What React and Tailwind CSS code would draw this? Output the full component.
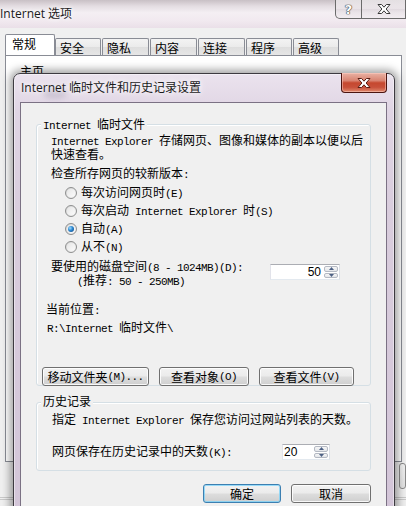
import React from 'react'

const MONO = "font-['Liberation_Mono',monospace] text-[11px] tracking-[-0.6px]"

// ASCII runs get the narrow mono face, the rest stays CJK
function M({ t }) {
  const parts = t.split(/([\x20-\x7E]+)/).filter(Boolean)
  return parts.map((p, i) =>
    /^[\x20-\x7E]+$/.test(p) ? (
      <span key={i} className={`${MONO} whitespace-pre`}>{p}</span>
    ) : (
      <span key={i}>{p}</span>
    )
  )
}

function XGlyph({ stroke }) {
  return (
    <svg width="14" height="10" viewBox="0 0 14 10">
      <path
        d="M1 0.5H4.6L7 3.2L9.4 0.5H13L9.1 5L13 9.5H9.4L7 6.8L4.6 9.5H1L4.9 5Z"
        fill="#fff"
        stroke={stroke}
        strokeWidth="1"
        strokeLinejoin="round"
      />
    </svg>
  )
}

function Radio({ on, label }) {
  return (
    <div className="flex h-[18px] items-center">
      <span className="flex h-[12px] w-[12px] items-center justify-center rounded-full border border-[#8e8f8f] bg-[linear-gradient(135deg,#d4d4d4,#f6f6f6)]">
        <span className="h-[8px] w-[8px] rounded-full bg-[linear-gradient(135deg,#e6e6e6,#fbfbfb)] flex items-center justify-center">
          {on && (
            <span className="h-[6px] w-[6px] rounded-full bg-[radial-gradient(circle_at_35%_35%,#9fdcff_0%,#2a86cf_45%,#0e3f78_100%)]" />
          )}
        </span>
      </span>
      <span className="ml-[4px] leading-[12px] whitespace-nowrap">
        <M t={label} />
      </span>
    </div>
  )
}

function SpinArrows() {
  return (
    <div className="flex w-[16px] flex-col gap-[1px] p-[1px]">
      <div className="flex flex-1 items-center justify-center rounded-[2px] border border-[#b4b9c3] bg-[linear-gradient(#f6f6f6,#e3e6ea)]">
        <svg width="5" height="3" viewBox="0 0 5 3">
          <path d="M0 3L2.5 0L5 3Z" fill="#4d6185" />
        </svg>
      </div>
      <div className="flex flex-1 items-center justify-center rounded-[2px] border border-[#b4b9c3] bg-[linear-gradient(#f6f6f6,#e3e6ea)]">
        <svg width="5" height="3" viewBox="0 0 5 3">
          <path d="M0 0L2.5 3L5 0Z" fill="#4d6185" />
        </svg>
      </div>
    </div>
  )
}

function Btn({ children, className = '', def = false }) {
  return (
    <div
      className={`flex h-[19px] items-center justify-center whitespace-nowrap rounded-[3px] border leading-[12px] bg-[linear-gradient(#f2f2f2_0%,#ebebeb_48%,#dddddd_52%,#cfcfcf_100%)] ${
        def
          ? 'border-[#3c7fb1] shadow-[inset_0_0_0_1px_rgba(120,210,250,0.75)]'
          : 'border-[#707070] shadow-[inset_0_0_0_1px_rgba(255,255,255,0.85)]'
      } ${className}`}
    >
      {children}
    </div>
  )
}

const TABS = [
  { label: '安全', w: 'w-[46px]' },
  { label: '隐私', w: 'w-[47px]' },
  { label: '内容', w: 'w-[47px]' },
  { label: '连接', w: 'w-[47px]' },
  { label: '程序', w: 'w-[46px]' },
  { label: '高级', w: 'w-[46px]' },
]

export default function App() {
  return (
    <div className="relative h-[506px] w-[406px] overflow-hidden bg-[#f0f0f0] font-['Noto_Sans_CJK_SC',sans-serif] text-[12px] text-black">
      {/* outer window: Internet 选项 */}
      <div className="flex h-[28px] bg-[linear-gradient(180deg,#c8c0c5_0%,#e4dde2_22%,#f4eff3_45%,#f1e9ef_75%,#eadfe8_100%)]">
        <div className="flex items-center font-['Open_Sans','Noto_Sans_CJK_SC',sans-serif] text-[12px] text-[#1a1a1a] [text-shadow:0_0_4px_#fff,0_0_6px_#fff]">
          Internet 选项
        </div>
        <div className="ml-auto flex h-[19px] self-start">
          <div className="flex w-[27px] items-center justify-center rounded-bl-[5px] border border-t-0 border-[#6b6b6b] bg-[linear-gradient(#ffffff80,#e8e2e680_50%,#d6ced480_51%,#f2eef180)]">
            <span className="font-['DejaVu_Sans',sans-serif] text-[13px] font-bold leading-none text-white [text-shadow:0_0_1px_#333,0_0_1px_#333,0_0_1px_#333]">
              ?
            </span>
          </div>
          <div className="flex w-[44px] items-center justify-center border border-t-0 border-l-0 border-[#6b6b6b] bg-[linear-gradient(#ffffff80,#e8e2e680_50%,#d6ced480_51%,#f2eef180)]">
            <XGlyph stroke="#3a3a3a" />
          </div>
        </div>
      </div>

      <div className="mt-[7px] flex h-[20px] items-end pl-[5px]">
        <div className="relative z-10 h-[21px] w-[50px] rounded-t-[2px] border border-b-0 border-[#898c95] bg-white pl-[6px] pt-[3px] leading-[12px]">
          常规
        </div>
        {TABS.map((t, i) => (
          <div
            key={t.label}
            className={`h-[17px] ${t.w} ${i === 0 ? 'ml-0' : 'ml-[1px]'} rounded-t-[2px] border border-b-0 border-[#898c95] bg-[linear-gradient(#f3f3f3,#ebebeb_50%,#dedede_51%,#e6e6e6)] pl-[4px] pt-[3px] leading-[12px]`}
          >
            {t.label}
          </div>
        ))}
      </div>

      <div className="ml-[5px] h-[407px] w-[397px] border border-[#898c95] bg-white pl-[14px] pt-[9px] leading-[12px]">
        主页
      </div>
      <div className="flex">
        <div className="ml-[399px] mt-[1px] h-[26px] w-[80px] rounded-[3px] border border-[#8a8a8a] bg-[linear-gradient(#f2f2f2,#e3e3e3)]" />
      </div>
      <div className="mt-[8px] h-[3px] border-y border-[#c9c9c9]" />

      {/* inner dialog */}
      <div className="absolute left-[13px] top-[73px] h-[450px] w-[382px] rounded-t-[7px] border border-[#3d3a40] bg-[linear-gradient(180deg,#ebe3ee_0%,#e0d5e4_8%,#d9cddd_30%,#d3c5d8_100%)] shadow-[0_0_9px_3px_rgba(0,0,0,0.38),inset_0_0_0_1px_rgba(255,255,255,0.45)]">
        <div className="relative flex h-[28px] items-center pl-[7px]">
          <div className="absolute left-[30px] top-[14px] h-[10px] w-[22px] rounded-full bg-[#9a93a8] opacity-40 blur-[3px]" />
          <span className="relative font-['Open_Sans','Noto_Sans_CJK_SC',sans-serif] text-[12px] text-[#1b1b1b] [text-shadow:0_0_5px_#fff,0_0_8px_#fff]">
            Internet 临时文件和历史记录设置
          </span>
          <div className="absolute right-[7px] top-[-1px] flex h-[20px] w-[46px] items-center justify-center rounded-b-[4px] border border-t-0 border-[#4a1410] bg-[linear-gradient(180deg,#e9b2a4_0%,#d98472_40%,#c6482f_52%,#c8503a_75%,#e08a6e_100%)] shadow-[inset_0_0_0_1px_rgba(255,210,200,0.5)]">
            <XGlyph stroke="#5a1c12" />
          </div>
        </div>

        <div className="ml-[6px] mr-[7px] h-[420px] border border-[#7b7184] bg-[#f0f0f0]">
          {/* Internet 临时文件 */}
          <div className="relative mx-[15px] mt-[21px] h-[262px] rounded-[3px] border border-[#d5dfe5] shadow-[inset_1px_1px_0_#fff]">
            <div className="absolute left-[4px] top-[-7px] bg-[#f0f0f0] px-[2px] leading-[12px] whitespace-nowrap">
              <M t="Internet 临时文件" />
            </div>
            <div className="mt-[9px] pl-[14px] leading-[12px] whitespace-nowrap">
              <M t="Internet Explorer 存储网页、图像和媒体的副本以便以后" />
              <br />
              快速查看。
            </div>
            <div className="mt-[7px] pl-[14px] leading-[12px]">
              <M t="检查所存网页的较新版本:" />
            </div>
            <div className="mt-[3px] pl-[28px]">
              <Radio label="每次访问网页时(E)" />
              <Radio label="每次启动 Internet Explorer 时(S)" />
              <Radio on label="自动(A)" />
              <Radio label="从不(N)" />
            </div>
            <div className="mt-[4px] flex items-start">
              <div className="pl-[14px] leading-[12px] whitespace-nowrap">
                <M t="要使用的磁盘空间(8 - 1024MB)(D):" />
                <br />
                <span className="pl-[26px]">
                  <M t="(推荐: 50 - 250MB)" />
                </span>
              </div>
              <div className="ml-auto mr-[30px] mt-[4px] flex h-[16px] w-[70px] border border-[#abadb3] border-b-[#e3e9ef] border-l-[#e2e3ea] border-r-[#dbdfe6] bg-white">
                <div className="flex flex-1 items-center justify-end pr-[2px] font-['Liberation_Sans',sans-serif] text-[12px] leading-none">
                  50
                </div>
                <SpinArrows />
              </div>
            </div>
            <div className="mt-[15px] pl-[9px] leading-[12px]">
              <M t="当前位置:" />
            </div>
            <div className="mt-[4px] pl-[10px] leading-[12px] whitespace-nowrap">
              <M t="R:\Internet 临时文件\" />
            </div>
            <div className="mt-[32px] flex gap-[10px] pl-[5px]">
              <Btn className="w-[107px]">
                <M t="移动文件夹(M)..." />
              </Btn>
              <Btn className="w-[90px]">
                <M t="查看对象(O)" />
              </Btn>
              <Btn className="w-[95px]">
                <M t="查看文件(V)" />
              </Btn>
            </div>
          </div>

          {/* 历史记录 */}
          <div className="relative mx-[15px] mt-[16px] h-[69px] rounded-[3px] border border-[#d5dfe5] shadow-[inset_1px_1px_0_#fff]">
            <div className="absolute left-[4px] top-[-8px] bg-[#f0f0f0] px-[2px] leading-[12px]">
              历史记录
            </div>
            <div className="mt-[10px] pl-[15px] leading-[12px] whitespace-nowrap">
              <M t="指定 Internet Explorer 保存您访问过网站列表的天数。" />
            </div>
            <div className="mt-[17px] flex h-[16px] items-center pl-[15px]">
              <div className="leading-[12px] whitespace-nowrap">
                <M t="网页保存在历史记录中的天数(K):" />
              </div>
              <div className="ml-auto mr-[40px] flex h-[16px] w-[48px] border border-[#abadb3] border-b-[#e3e9ef] border-l-[#e2e3ea] border-r-[#dbdfe6] bg-white">
                <div className="flex flex-1 items-center pl-[1px] font-['Liberation_Sans',sans-serif] text-[12px] leading-none">
                  20
                </div>
                <SpinArrows />
              </div>
            </div>
          </div>

          <div className="mx-[15px] mt-[13px] flex justify-end gap-[10px]">
            <Btn def className="w-[78px]">
              确定
            </Btn>
            <Btn className="w-[80px]">取消</Btn>
          </div>
        </div>
      </div>
    </div>
  )
}
